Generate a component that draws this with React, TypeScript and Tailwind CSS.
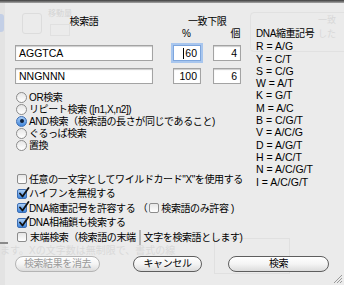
import React from "react";

const dnaCodes = [
  "R = A/G",
  "Y = C/T",
  "S = C/G",
  "W = A/T",
  "K = G/T",
  "M = A/C",
  "B = C/G/T",
  "V = A/C/G",
  "D = A/G/T",
  "H = A/C/T",
  "N = A/C/G/T",
  "I = A/C/G/T",
];

const searchModes = [
  { label: "OR検索", on: false },
  { label: "リピート検索 ([n1,X,n2])", on: false },
  { label: "AND検索（検索語の長さが同じであること)", on: true },
  { label: "ぐるっぱ検索", on: false },
  { label: "置換", on: false },
];

// japanese labels are set a little tighter, like the Hiragino fallback
const jp = "text-[10px] tracking-[-0.4px]";

function Radio({ on }: { on: boolean }) {
  if (on) {
    return (
      <span className="flex h-[11px] w-[11px] shrink-0 items-center justify-center rounded-full border border-[#3d6eb4] bg-gradient-to-b from-[#a9cdf5] to-[#3f86db]">
        <span className="h-[4px] w-[4px] rounded-full bg-[#10203a]" />
      </span>
    );
  }
  return (
    <span className="h-[11px] w-[11px] shrink-0 rounded-full border border-[#8c8c8c] bg-gradient-to-b from-[#e6e6e6] to-white" />
  );
}

function Check({ on }: { on: boolean }) {
  return (
    <span
      className={
        on
          ? "relative h-[10px] w-[10px] shrink-0 rounded-[2px] border border-[#3d6eb4] bg-gradient-to-b from-[#a9cdf5] to-[#3f86db]"
          : "relative h-[10px] w-[10px] shrink-0 rounded-[2px] border border-[#8c8c8c] bg-gradient-to-b from-[#e6e6e6] to-white"
      }
    >
      {on && (
        <svg
          className="absolute left-[0px] top-[-3px]"
          width="12"
          height="12"
          viewBox="0 0 12 12"
        >
          <path
            d="M2 6.5 L4.5 9.5 L10.5 1"
            fill="none"
            stroke="#111"
            strokeWidth="1.8"
            strokeLinecap="round"
            strokeLinejoin="round"
          />
        </svg>
      )}
    </span>
  );
}

function Field({
  value,
  width,
  right,
  focus,
}: {
  value: string;
  width: string;
  right?: boolean;
  focus?: boolean;
}) {
  return (
    <div
      className={`${width} flex h-[16px] items-center border bg-white px-[3px] text-[10.5px] ${
        right ? "justify-end" : "justify-start"
      } ${
        focus
          ? "border-[#7ea6dd] shadow-[0_0_0_2px_#a8c6ee]"
          : "border-[#a3a3a3] shadow-[inset_0_1px_1px_#cccccc]"
      }`}
    >
      {focus && <span className="mr-[1px] h-[11px] w-[1px] bg-black" />}
      <span className="leading-none">{value}</span>
    </div>
  );
}

function AquaButton({
  label,
  width,
  disabled,
}: {
  label: string;
  width: string;
  disabled?: boolean;
}) {
  return (
    <button
      className={`${width} flex h-[16px] items-center justify-center rounded-full border bg-gradient-to-b from-white via-[#f4f4f4] to-[#dcdcdc] leading-none ${jp} ${
        disabled
          ? "border-[#b4b4b4] text-[#9a9a9a]"
          : "border-[#5e5e5e] text-black"
      }`}
    >
      {label}
    </button>
  );
}

export default function App() {
  return (
    <div className="relative h-[285px] w-[344px] overflow-hidden bg-[#ebebeb] font-['Liberation_Sans','Noto_Sans_CJK_JP',sans-serif] text-[10.5px] text-black">
      {/* faint window content behind the sheet */}
      <div className="absolute inset-x-0 top-0 h-[3px] bg-gradient-to-b from-[#3e3e3e] to-[#a8a8a8]" />
      <div className="absolute left-0 top-[3px] h-full w-[5px] bg-[#e3e3e3]" />
      <div className="absolute left-0 top-[14px] h-[18px] w-[4px] rounded-r-[3px] bg-[#c3cfe6]" />
      <div className="absolute left-[22px] top-[13px] h-[21px] w-[20px] rounded-[3px] border border-[#dcdcdc]" />
      <div className="absolute left-[48px] top-[8px] text-[8px] text-[#d4d4d4]">移動量</div>
      <div className="absolute left-[50px] top-[24px] h-[12px] w-[20px] border border-[#e0e0e0]" />
      <div className="absolute left-[250px] top-[12px] h-[40px] w-[100px] rounded-[4px] border border-[#e1e1e1]" />
      <div className="absolute left-[318px] top-[14px] text-[9px] text-[#d8d8d8]">一致した</div>
      <div className="absolute left-0 top-[243px] whitespace-nowrap text-[10px] text-[#d9d9d9]">
        ます。Xの文字数は無制限で、書式の線
      </div>
      <div className="absolute left-[214px] top-[238px] h-[36px] w-[76px] border border-[#e0e0e0]" />
      <div className="absolute left-0 top-[242px] h-[2px] w-[8px] bg-[#8a8a8a]" />

      <div className="relative flex">
        {/* left side */}
        <div className="w-[241px] shrink-0 pl-[15px]">
          <div className={`flex pt-[16px] leading-[12px] ${jp}`}>
            <div className="w-[138px] text-center">検索語</div>
            <div className="ml-[20px] w-[68px]">
              <div className="pl-[15px]">一致下限</div>
              <div className="flex pl-[9px]">
                <span>%</span>
                <span className="ml-[40px]">個</span>
              </div>
            </div>
          </div>

          <div className="mt-[5px] flex flex-col gap-[7px]">
            <div className="flex">
              <Field value="AGGTCA" width="w-[138px]" />
              <div className="ml-[20px]">
                <Field value="60" width="w-[28px]" right focus />
              </div>
              <div className="ml-[12px]">
                <Field value="4" width="w-[28px]" right />
              </div>
            </div>
            <div className="flex">
              <Field value="NNGNNN" width="w-[138px]" />
              <div className="ml-[20px]">
                <Field value="100" width="w-[28px]" right />
              </div>
              <div className="ml-[12px]">
                <Field value="6" width="w-[28px]" right />
              </div>
            </div>
          </div>

          <div className="mt-[7px] flex flex-col pl-[1px]">
            {searchModes.map((mode) => (
              <div
                key={mode.label}
                className="flex h-[12px] items-center gap-[2px] whitespace-nowrap"
              >
                <Radio on={mode.on} />
                <span className={jp}>{mode.label}</span>
              </div>
            ))}
          </div>

          <div className={`mt-[21px] flex flex-col pl-[2px] ${jp}`}>
            <div className="flex h-[14.5px] items-center gap-[2px] whitespace-nowrap">
              <Check on={false} />
              <span>任意の一文字としてワイルドカード"X"を使用する</span>
            </div>
            <div className="flex h-[14.5px] items-center gap-[2px] whitespace-nowrap">
              <Check on />
              <span>ハイフンを無視する</span>
            </div>
            <div className="flex h-[14.5px] items-center gap-[2px] whitespace-nowrap">
              <Check on />
              <span>DNA縮重記号を許容する （</span>
              <Check on={false} />
              <span>検索語のみ許容 )</span>
            </div>
            <div className="flex h-[14.5px] items-center gap-[2px] whitespace-nowrap">
              <Check on />
              <span>DNA相補鎖も検索する</span>
            </div>
            <div className="flex h-[14.5px] items-center gap-[3px] whitespace-nowrap">
              <Check on={false} />
              <span>末端検索（検索語の末端</span>
              <span className="h-[15px] w-[20px] border border-[#b4b4b4] bg-white" />
              <span>文字を検索語とします)</span>
            </div>
          </div>
        </div>

        {/* degenerate code legend */}
        <div className="ml-[15px] whitespace-nowrap pt-[28px] leading-[12.3px]">
          <div className={jp}>DNA縮重記号</div>
          {dnaCodes.map((code, i) => (
            <div key={i}>{code}</div>
          ))}
        </div>
      </div>

      <div className="relative mt-[11px] flex pl-[15px]">
        <AquaButton label="検索結果を消去" width="w-[85px]" disabled />
        <div className="ml-[33px]">
          <AquaButton label="キャンセル" width="w-[69px]" />
        </div>
        <div className="ml-[26px]">
          <AquaButton label="検索" width="w-[101px]" />
        </div>
      </div>

      {/* resize grip */}
      <svg
        className="absolute bottom-[1px] right-[1px]"
        width="11"
        height="11"
        viewBox="0 0 11 11"
      >
        <path
          d="M10 2 L2 10 M10 5 L5 10 M10 8 L8 10"
          stroke="#9a9a9a"
          strokeWidth="1"
        />
      </svg>
    </div>
  );
}
